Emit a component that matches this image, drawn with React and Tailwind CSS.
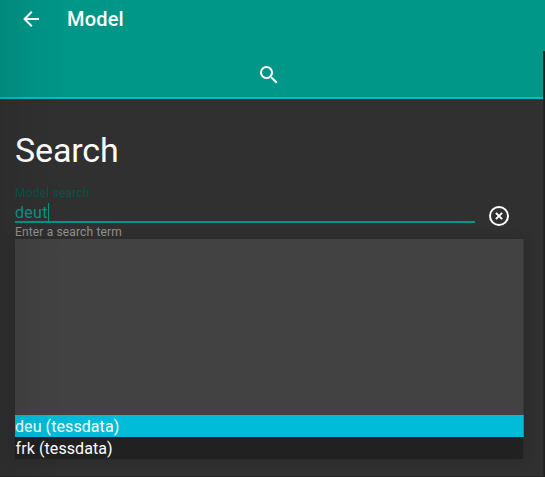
function BackIcon() {
  return (
    <svg className="h-6 w-6" viewBox="0 0 24 24" fill="currentColor">
      <path d="M20 11v2H8l5.5 5.5-1.42 1.42L4.16 12l7.92-7.92L13.5 5.5 8 11h12z" />
    </svg>
  );
}

function SearchIcon() {
  return (
    <svg className="h-6 w-6" viewBox="0 0 24 24" fill="currentColor">
      <path d="M9.5 3A6.5 6.5 0 0 1 16 9.5c0 1.61-.59 3.09-1.56 4.23l.27.27h.79l5 5-1.5 1.5-5-5v-.79l-.27-.27A6.516 6.516 0 0 1 9.5 16a6.5 6.5 0 0 1 0-13m0 2C7 5 5 7 5 9.5S7 14 9.5 14 14 12 14 9.5 12 5 9.5 5z" />
    </svg>
  );
}

function ClearIcon() {
  return (
    <svg className="h-6 w-6" viewBox="0 0 24 24" fill="none" stroke="currentColor" strokeWidth="2">
      <circle cx="12" cy="12" r="9" />
      <path d="M8.9 8.9l6.2 6.2M15.1 8.9l-6.2 6.2" />
    </svg>
  );
}

function Toolbar() {
  return (
    <header className="flex h-[51px] items-start bg-[#009688] text-white">
      <div className="ml-[19px] mt-[7px]">
        <BackIcon />
      </div>
      <h1 className="ml-6 mt-[7px] text-[20px] font-medium leading-6 tracking-[0.2px]">Model</h1>
    </header>
  );
}

function Tabs() {
  return (
    <nav className="flex h-12 items-start justify-center border-b-2 border-[#00bcd4] bg-[#009688] pr-[5px] pt-[12px] text-white">
      <SearchIcon />
    </nav>
  );
}

function SearchField() {
  return (
    <div className="flex">
      <div className="w-[460px]">
        <div className="h-[18px] text-[12px] leading-4 tracking-[0.2px] text-[#025548]">Model search</div>
        <div className="flex h-5 items-start border-b-2 border-[#009688] text-[16px] leading-[20px] tracking-[0.3px] text-[#009688]">
          <span className="w-[33px]">deut</span>
          <span className="h-[18px] w-px bg-[#009688]" />
        </div>
        <div className="h-4 text-[12px] leading-[18px] tracking-[0.15px] text-[#919191]">Enter a search term</div>
      </div>
      <div className="ml-3 mt-[19px] text-white">
        <ClearIcon />
      </div>
    </div>
  );
}

function Results() {
  return (
    <div className="w-[509px] text-[16px] leading-[24px] tracking-[0.08px] text-white shadow-[0_2px_12px_rgba(0,0,0,0.16)]">
      <div className="h-[176px] border-r border-[#363636] bg-[#424242]" />
      <div className="h-[22px] border-r border-[#1493a3] bg-[#00bcd8]">deu (tessdata)</div>
      <div className="h-[22px] border-r border-[#2a2a2a] bg-[#212121] pl-[0.6px]">frk (tessdata)</div>
    </div>
  );
}

export default function App() {
  return (
    <div className="relative h-[477px] w-[545px] overflow-hidden bg-[#303030] font-[Roboto,sans-serif]">
      <Toolbar />
      <main className="mr-px h-[426px] border-b border-r border-b-[#262122] border-r-[#18403c] border-r-[#262626] shadow-[1px_0_0_#202020]">
        <Tabs />
        <section className="pl-[15px] pt-[31px]">
          <h2 className="h-[55px] text-[34px] leading-[40px] tracking-[-0.15px] text-white">Search</h2>
          <SearchField />
          <Results />
        </section>
      </main>
      <div className="pointer-events-none absolute inset-y-0 left-0 w-[70px] bg-gradient-to-r from-black/8 via-black/3 to-transparent" />
    </div>
  );
}
